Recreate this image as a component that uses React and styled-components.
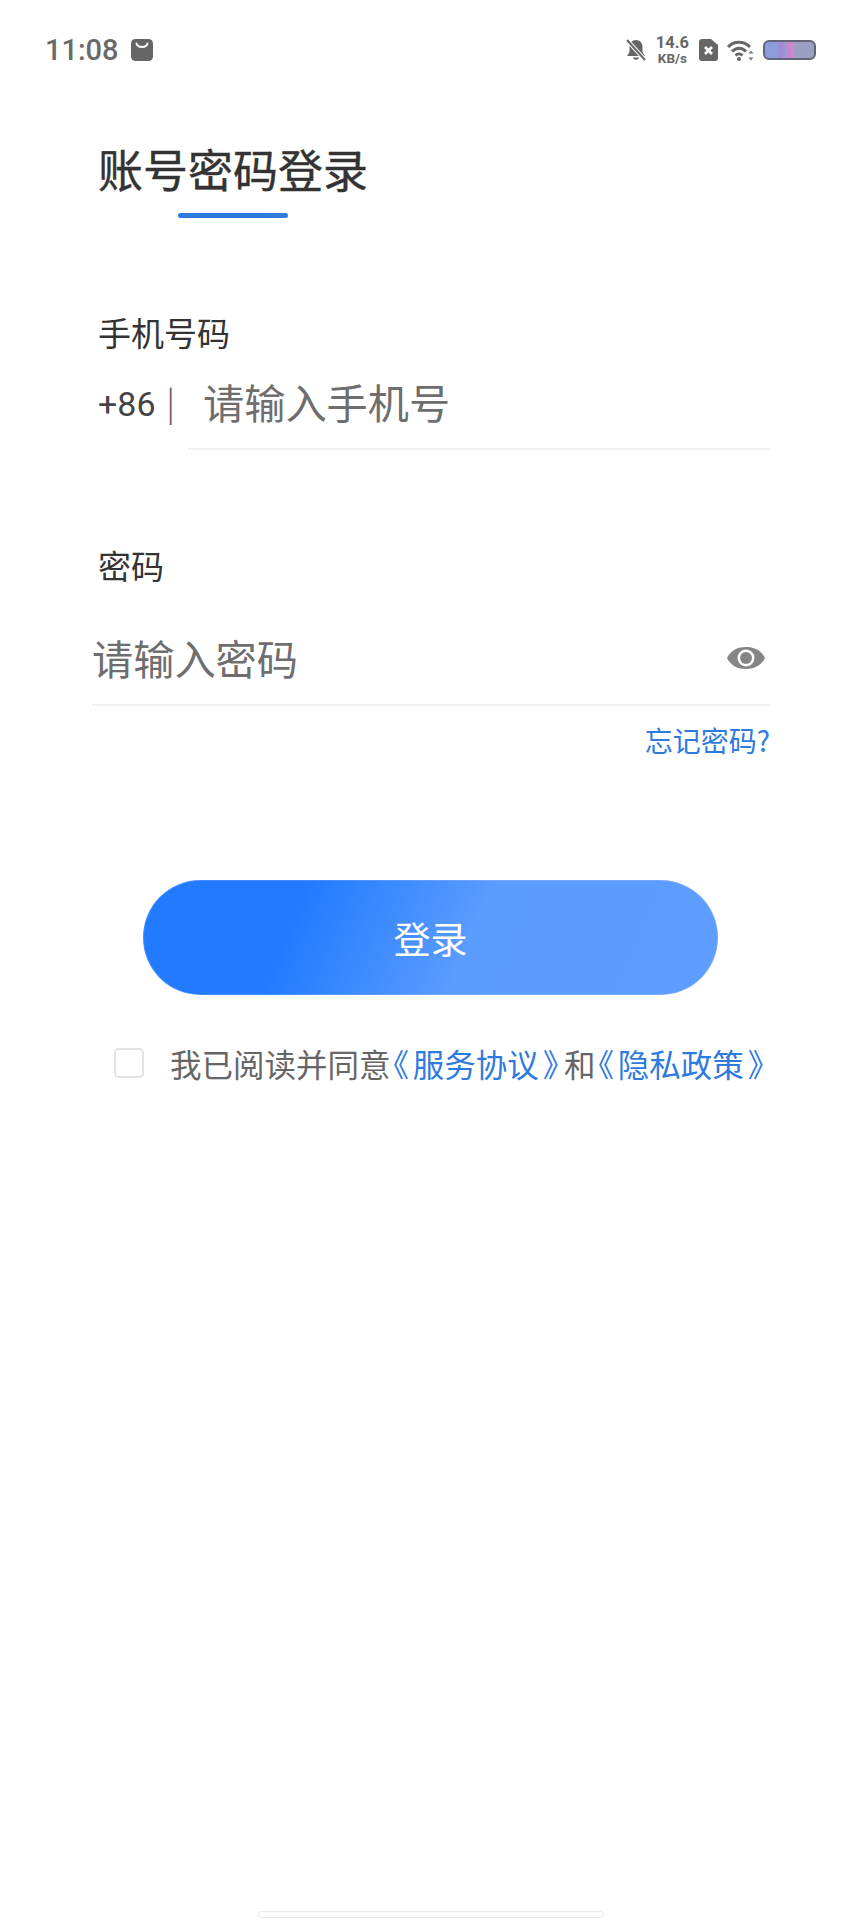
import React from "react";
import styled, { createGlobalStyle } from "styled-components";

const GlobalStyle = createGlobalStyle`
  html, body {
    margin: 0;
    padding: 0;
    background: #fff;
  }
  body {
    font-family: "Noto Sans CJK SC", "Noto Sans", sans-serif;
  }
`;

const App = () => {
  return (
    <Page>
      <GlobalStyle />
      <StatusBar>
        <StatusLeft>
          <Time>11:08</Time>
          <svg width="22" height="22" viewBox="0 0 22 22">
            <rect width="22" height="22" rx="4.5" fill="#666" />
            <path d="M5.500 4.500c1 4.500 10 4.500 11 0" fill="none" stroke="#fff" strokeWidth="2" strokeLinecap="round" />
          </svg>
        </StatusLeft>
        <StatusRight>
          <svg width="20" height="22" viewBox="0 0 20 22">
            <path d="M10 1C6 1 3.500 4 3.500 8v5L1 17h18l-2.500-4V8C16.500 4 14 1 10 1z" fill="#666" />
            <path d="M7 18.500h6c-.5 3-5.500 3-6 0z" fill="#666" />
            <path d="M1 1l18 20" stroke="#fff" strokeWidth="4" />
            <path d="M1 1l18 20" stroke="#666" strokeWidth="2" />
          </svg>
          <Speed>
            <SpeedValue>14.6</SpeedValue>
            <SpeedUnit>KB/s</SpeedUnit>
          </Speed>
          <svg width="19" height="22" viewBox="0 0 19 22">
            <path d="M3 0h9l7 6v13a3 3 0 0 1-3 3H3a3 3 0 0 1-3-3V3a3 3 0 0 1 3-3z" fill="#666" />
            <path d="M6 8l7 7M13 8l-7 7" stroke="#fff" strokeWidth="2.800" />
          </svg>
          <svg width="27" height="21" viewBox="0 0 27 21">
            <path d="M1 7c6-6.500 16-6.500 22 0" fill="none" stroke="#666" strokeWidth="3" />
            <path d="M5 11.500c4.500-4.500 10-4.500 14 0" fill="none" stroke="#666" strokeWidth="3" />
            <path d="M8.500 15.500c2-2 5-2 7 0" fill="none" stroke="#666" strokeWidth="2.800" />
            <circle cx="12" cy="19" r="2" fill="#666" />
            <path d="M24 10.500l-2.500 3h5zM24 20.500l-2.500-3h5z" fill="#777" />
          </svg>
          <Battery />
        </StatusRight>
      </StatusBar>

      <Content>
        <TitleBlock>
          <Title>账号密码登录</Title>
          <TitleBar />
        </TitleBlock>

        <PhoneLabel>手机号码</PhoneLabel>
        <PhoneRow>
          <Prefix>
            +86 <Pipe>|</Pipe>
          </Prefix>
          <PhoneField>
            <Placeholder>请输入手机号</Placeholder>
          </PhoneField>
        </PhoneRow>

        <PasswordLabel>密码</PasswordLabel>
        <PasswordField>
          <Placeholder>请输入密码</Placeholder>
          <svg width="38" height="24" viewBox="0 0 38 24">
            <path d="M0 12C4 4 11 1 19 1s15 3 19 11c-4 8-11 11-19 11S4 20 0 12z" fill="#858585" />
            <circle cx="19" cy="12" r="8.500" fill="#fff" />
            <circle cx="19" cy="12" r="6" fill="#858585" />
          </svg>
        </PasswordField>
        <ForgotRow>
          <Link>忘记密码?</Link>
        </ForgotRow>

        <LoginButton type="button">登录</LoginButton>

        <AgreeRow>
          <Checkbox />
          <AgreeText>
            我已阅读并同意
            <Link>
              <OpenBracket>《</OpenBracket>服务协议<CloseBracket>》</CloseBracket>
            </Link>
            和
            <Link>
              <OpenBracket>《</OpenBracket>隐私政策<CloseBracket>》</CloseBracket>
            </Link>
          </AgreeText>
        </AgreeRow>
      </Content>

      <HomeBar />
    </Page>
  );
};

export default App;

const Page = styled.div`
  width: 861px;
  height: 1920px;
  display: flex;
  flex-direction: column;
  background: #fff;
  overflow: hidden;
`;

const StatusBar = styled.div`
  height: 50px;
  margin-top: 25px;
  padding: 0 45px;
  display: flex;
  align-items: center;
  justify-content: space-between;
`;

const StatusLeft = styled.div`
  display: flex;
  align-items: center;
  gap: 12px;
`;

const Time = styled.span`
  font-family: "Roboto", sans-serif;
  font-size: 29px;
  font-weight: 500;
  color: #6a6a6a;
`;

const StatusRight = styled.div`
  display: flex;
  align-items: center;
  gap: 9px;
`;

const Speed = styled.div`
  display: flex;
  flex-direction: column;
  align-items: center;
  margin: 0 1px;
  font-family: "Roboto", sans-serif;
  font-weight: 700;
  color: #666;
`;

const SpeedValue = styled.span`
  font-size: 16.500px;
  line-height: 16px;
`;

const SpeedUnit = styled.span`
  font-size: 13.500px;
  line-height: 14px;
`;

const Battery = styled.div`
  width: 53px;
  height: 20px;
  box-sizing: border-box;
  border: 2.500px solid #62657a;
  border-radius: 6px;
  background: linear-gradient(
    90deg,
    #8a9bdf 0%,
    #8f9cdc 24%,
    #a584d8 32%,
    #a090d4 38%,
    #9a9cd0 42%,
    #d084cc 50%,
    #c88ccc 56%,
    #9aa0c4 64%,
    #9aa0c0 100%
  );
`;

const Content = styled.div`
  display: flex;
  flex-direction: column;
  padding: 0 91px 0 98px;
`;

const TitleBlock = styled.div`
  margin-top: 64px;
  display: flex;
  flex-direction: column;
`;

const Title = styled.h1`
  margin: 0;
  font-size: 45px;
  line-height: 60px;
  font-weight: 400;
  color: #333;
  -webkit-text-stroke: 0.4px #333;
`;

const TitleBar = styled.div`
  width: 110px;
  height: 5px;
  margin: 14px 0 0 80px;
  border-radius: 3px;
  background: #2e7be0;
`;

const FieldLabel = styled.div`
  font-size: 33px;
  line-height: 44px;
  color: #333;
`;

const PhoneLabel = styled(FieldLabel)`
  margin-top: 92px;
`;

const PhoneRow = styled.div`
  display: flex;
  align-items: stretch;
  margin-top: 17px;
`;

const Prefix = styled.span`
  width: 90px;
  flex: none;
  padding-top: 2px;
  font-family: "Roboto", sans-serif;
  font-size: 34px;
  line-height: 60px;
  white-space: pre;
  word-spacing: -3px;
  color: #444;
`;

const Pipe = styled.span`
  font-family: "Open Sans", sans-serif;
  font-size: 36px;
  font-weight: 300;
  color: #555;
`;

const PhoneField = styled.div`
  flex: 1;
  height: 79px;
  padding-left: 15px;
  display: flex;
  align-items: flex-start;
  box-sizing: border-box;
  border-bottom: 2px solid #f0f0f0;
`;

const Placeholder = styled.span`
  font-size: 41.200px;
  line-height: 60px;
  color: #6e6e6e;
`;

const PasswordLabel = styled(FieldLabel)`
  margin-top: 93px;
`;

const PasswordField = styled.div`
  height: 79px;
  margin: 40px 0 0 -6px;
  padding: 0 5px 0 0;
  display: flex;
  justify-content: space-between;
  align-items: flex-start;
  box-sizing: border-box;
  border-bottom: 2px solid #f0f0f0;

  svg {
    margin-top: 19px;
  }
`;

const ForgotRow = styled.div`
  margin-top: 14px;
  display: flex;
  justify-content: flex-end;
  font-size: 28px;
  line-height: 40px;
`;

const Link = styled.span`
  color: #2e7be0;
`;

const OpenBracket = styled.span`
  font-feature-settings: "palt";
  margin: 0 4.500px 0 2px;
`;

const CloseBracket = styled.span`
  font-feature-settings: "palt";
  margin: 0 5px 0 4.500px;
`;

const LoginButton = styled.button`
  width: 575px;
  height: 115px;
  margin: 120px 0 0 45px;
  border: none;
  border-radius: 58px;
  background: linear-gradient(113deg, #227bff 0%, #227bff 27%, #5b9cff 57%, #5e9dff 100%);
  box-shadow: inset 0 0 0 1px rgba(255, 255, 255, 0.15);
  color: #fff;
  font-family: inherit;
  font-size: 37px;
`;

const AgreeRow = styled.div`
  margin: 46px 0 0 16px;
  display: flex;
  align-items: center;
  gap: 26px;
`;

const Checkbox = styled.div`
  width: 30px;
  height: 30px;
  flex: none;
  box-sizing: border-box;
  border: 2px solid #e2e2e2;
  border-radius: 5px;
`;

const AgreeText = styled.div`
  font-size: 31.500px;
  line-height: 44px;
  white-space: nowrap;
  color: #666;
`;

const HomeBar = styled.div`
  width: 346px;
  height: 7px;
  margin: auto auto 2px;
  box-sizing: border-box;
  border: 1.500px solid #e8e8e8;
  border-radius: 4px;
`;
